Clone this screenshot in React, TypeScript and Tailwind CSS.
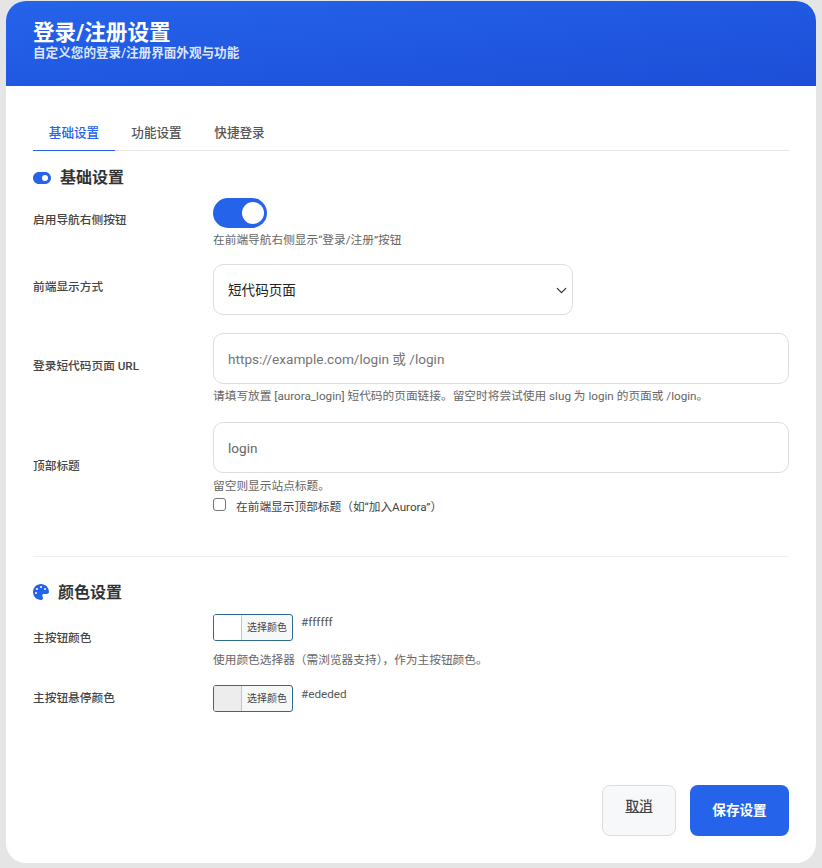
import { FaPalette, FaToggleOn } from 'react-icons/fa6'
import { ChevronDown } from 'lucide-react'

const font = "font-['Roboto','Noto_Sans_CJK_SC',sans-serif]"

function ColorPick({ color }: { color: string }) {
  return (
    <div className="flex h-[27px] w-[80px] overflow-hidden rounded-[3px] border border-[#2f6a8f] bg-[#f6f7f7]">
      <div className={`w-[28px] border-r border-[#c3c4c7] ${color}`} />
      <div className="flex-1 text-center text-[10px] leading-[26px] text-[#444]">选择颜色</div>
    </div>
  )
}

export default function App() {
  return (
    <div className={`${font} h-[868px] w-[822px] overflow-hidden bg-[#e5e5e5] pl-[6px] pt-[1px]`}>
      <div className="h-[862px] w-[810px] overflow-hidden rounded-[20px] bg-white">
        {/* Header */}
        <div className="h-[85px] bg-gradient-to-br from-[#2563eb] to-[#1d4ed8] px-[27px] pt-[20px] text-white">
          <h1 className="text-[21.6px] font-bold leading-[24px]">登录/注册设置</h1>
          <p className="text-[12.6px] font-semibold leading-[16px] text-[#dbe6fd]">自定义您的登录/注册界面外观与功能</p>
        </div>

        <div className="px-[27px]">
          {/* Tabs */}
          <div className="mt-[30px] flex h-[35px] border-b border-[#e5e7eb] text-[12.6px] font-medium text-[#555]">
            <div className="h-[35px] w-[82px] border-b border-[#2563eb] pt-[8px] text-center leading-[18px] text-[#2563eb]">基础设置</div>
            <div className="h-[35px] w-[83px] pt-[8px] text-center leading-[18px]">功能设置</div>
            <div className="h-[35px] w-[83px] pt-[8px] text-center leading-[18px]">快捷登录</div>
          </div>

          {/* Basic */}
          <div className="mt-[15px] flex h-[24px] items-center gap-[9px]">
            <FaToggleOn className="h-[18px] w-[18px] text-[#2563eb]" />
            <h2 className="text-[16px] font-bold leading-[24px] text-[#333]">基础设置</h2>
          </div>

          <div className="mt-[8px] grid grid-cols-[180px_1fr]">
            <label className="pt-[13px] text-[11.7px] font-medium leading-[18px] text-[#444]">启用导航右侧按钮</label>
            <div>
              <div className="flex h-[30px] w-[54px] items-center justify-end rounded-full bg-[#2563eb] pr-[3px]">
                <div className="h-[22px] w-[22px] rounded-full bg-white" />
              </div>
              <p className="mt-[3px] text-[11.7px] leading-[18px] text-[#666]">在前端导航右侧显示“登录/注册”按钮</p>
            </div>
          </div>

          <div className="mt-[15px] grid grid-cols-[180px_1fr]">
            <label className="pt-[14px] text-[11.7px] font-medium leading-[18px] text-[#444]">前端显示方式</label>
            <div className="flex h-[51px] w-[360px] items-center justify-between rounded-[10px] border border-[#ddd] pl-[14px] pr-[2px] pt-[2px] text-[13.6px] text-[#222]">
              <span>短代码页面</span>
              <ChevronDown className="h-[17px] w-[17px] text-[#333]" strokeWidth={1.75} />
            </div>
          </div>

          <div className="mt-[18px] grid grid-cols-[180px_1fr]">
            <label className="pt-[24px] text-[11.7px] font-medium leading-[18px] text-[#444]">登录短代码页面 URL</label>
            <div>
              <div className="h-[51px] rounded-[10px] border border-[#ddd] pl-[14px] text-[13.6px] leading-[51px] text-[#757575]">https://example.com/login 或 /login</div>
              <p className="mt-[3px] text-[11.7px] leading-[18px] text-[#666]">请填写放置 [aurora_login] 短代码的页面链接。留空时将尝试使用 slug 为 login 的页面或 /login。</p>
            </div>
          </div>

          <div className="mt-[17px] grid grid-cols-[180px_1fr]">
            <label className="pt-[35px] text-[11.7px] font-medium leading-[18px] text-[#444]">顶部标题</label>
            <div>
              <div className="h-[51px] rounded-[10px] border border-[#ddd] pl-[14px] text-[13.6px] leading-[51px] text-[#666]">login</div>
              <p className="mt-[4px] text-[11.7px] leading-[18px] text-[#666]">留空则显示站点标题。</p>
              <div className="mt-[1px] flex h-[20px] items-center">
                <div className="mb-[4px] h-[13px] w-[13px] rounded-[3px] border border-[#767676] bg-white" />
                <span className="ml-[10px] pt-[2px] text-[11.7px] leading-[18px] text-[#444]">在前端显示顶部标题（如“加入Aurora”）</span>
              </div>
            </div>
          </div>

          <div className="mt-[40px] border-t border-[#eeeeee]" />

          {/* Colors */}
          <div className="mt-[23px] flex h-[24px] items-center gap-[9px]">
            <FaPalette className="h-[16px] w-[16px] text-[#2563eb]" />
            <h2 className="pt-[2px] text-[16px] font-bold leading-[24px] text-[#333]">颜色设置</h2>
          </div>

          <div className="mt-[10px] grid grid-cols-[180px_1fr]">
            <label className="pt-[15px] text-[11.7px] font-medium leading-[18px] text-[#444]">主按钮颜色</label>
            <div>
              <div className="flex items-start gap-[8px]">
                <ColorPick color="bg-white" />
                <span className="text-[11.7px] leading-[17px] text-[#555]">#ffffff</span>
              </div>
              <p className="mt-[10px] text-[11.7px] leading-[18px] text-[#666]">使用颜色选择器（需浏览器支持），作为主按钮颜色。</p>
            </div>
          </div>

          <div className="mt-[16px] grid grid-cols-[180px_1fr]">
            <label className="pt-[4px] text-[11.7px] font-medium leading-[18px] text-[#444]">主按钮悬停颜色</label>
            <div className="flex items-start gap-[8px]">
              <ColorPick color="bg-[#ededed]" />
              <span className="pt-[1px] text-[11.7px] leading-[17px] text-[#555]">#ededed</span>
            </div>
          </div>

          {/* Footer */}
          <div className="mt-[73px] flex justify-end gap-[14px]">
            <div className="h-[51px] w-[74px] rounded-[8px] border border-[#dddddd] bg-[#f7f8fa] pt-[10px] text-center text-[13.6px] font-medium leading-[20px] text-[#444] underline">取消</div>
            <div className="h-[51px] w-[99px] rounded-[8px] bg-[#2563eb] text-center text-[13.6px] font-semibold leading-[51px] text-white">保存设置</div>
          </div>
        </div>
      </div>
    </div>
  )
}
